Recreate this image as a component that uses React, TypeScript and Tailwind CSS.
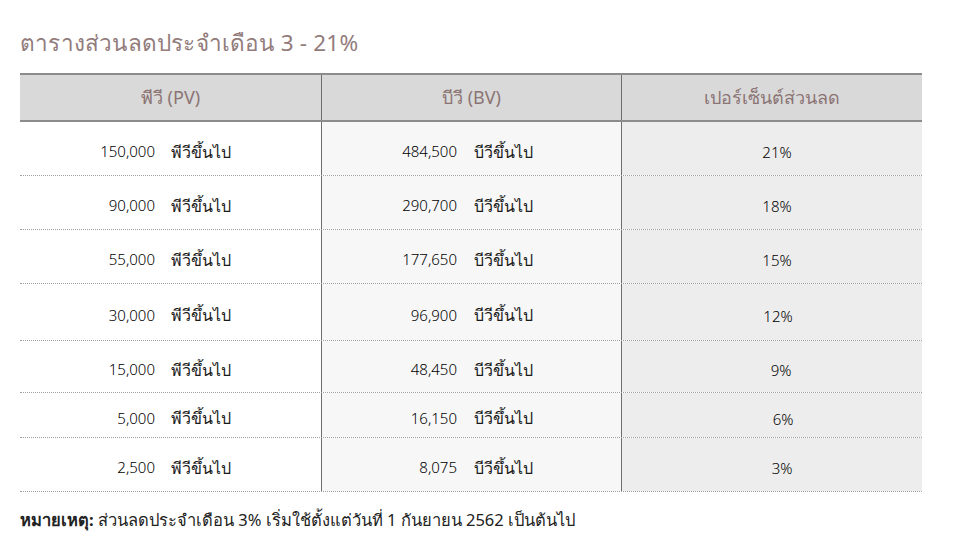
import React from "react";

const rows = [
  { pv: "150,000", bv: "484,500", pct: "21%", h: "h-[54px]", pl: "pl-[10px]" },
  { pv: "90,000", bv: "290,700", pct: "18%", h: "h-[54px]", pl: "pl-[10px]" },
  { pv: "55,000", bv: "177,650", pct: "15%", h: "h-[54px]", pl: "pl-[10px]" },
  { pv: "30,000", bv: "96,900", pct: "12%", h: "h-[57px]", pl: "pl-[12px]" },
  { pv: "15,000", bv: "48,450", pct: "9%", h: "h-[52px]", pl: "pl-[18px]" },
  { pv: "5,000", bv: "16,150", pct: "6%", h: "h-[45px]", pl: "pl-[22px]" },
  { pv: "2,500", bv: "8,075", pct: "3%", h: "h-[54px]", pl: "pl-[20px]" },
];

export default function App() {
  return (
    <div className="w-[956px] h-[555px] bg-white font-['Noto_Sans','Liberation_Sans',sans-serif] text-black">
      <div className="pt-[27px] pl-[20px]">
        <h1 className="text-[22.5px] leading-[32px] font-normal text-[#927c7c] tracking-[0.2px]">
          ตารางส่วนลดประจำเดือน 3 - 21%
        </h1>
      </div>
      <div className="mt-[14px] ml-[20px] w-[902px]">
        <div className="flex h-[49px] bg-[#d9d9d9] border-t-2 border-b-2 border-[#8c8c8c] text-[#8b7474] text-[18px] font-normal">
          <div className="w-[301px] flex items-center justify-center">พีวี (PV)</div>
          <div className="w-[300px] flex items-center justify-center border-l border-[#6e6e6e]">บีวี (BV)</div>
          <div className="w-[301px] flex items-center justify-center border-l border-[#6e6e6e]">เปอร์เซ็นต์ส่วนลด</div>
        </div>
        {rows.map((r) => (
          <div key={r.pv} className={`flex ${r.h} border-b border-dotted border-[#a0a0a0]`}>
            <div className="w-[301px] flex items-center bg-white pt-[6px]">
              <span className="w-[135px] text-right text-[15px] font-light">{r.pv}</span>
              <span className="ml-[16px] text-[16px] font-normal text-[#1a1a1a]">พีวีขึ้นไป</span>
            </div>
            <div className="w-[300px] flex items-center bg-[#f7f7f7] border-l border-[#6e6e6e] pt-[6px]">
              <span className="w-[135px] text-right text-[15px] font-light">{r.bv}</span>
              <span className="ml-[17px] text-[16px] font-normal text-[#1a1a1a]">บีวีขึ้นไป</span>
            </div>
            <div className={`w-[301px] flex items-center justify-center bg-[#ededed] border-l border-[#6e6e6e] text-[15px] font-light pt-[8px] ${r.pl}`}>
              {r.pct}
            </div>
          </div>
        ))}
      </div>
      <div className="mt-[16px] ml-[20px] text-[16.5px] text-[#222] font-normal">
        <span className="font-bold">หมายเหตุ:</span> ส่วนลดประจำเดือน 3% เริ่มใช้ตั้งแต่วันที่ 1 กันยายน 2562 เป็นต้นไป
      </div>
    </div>
  );
}
